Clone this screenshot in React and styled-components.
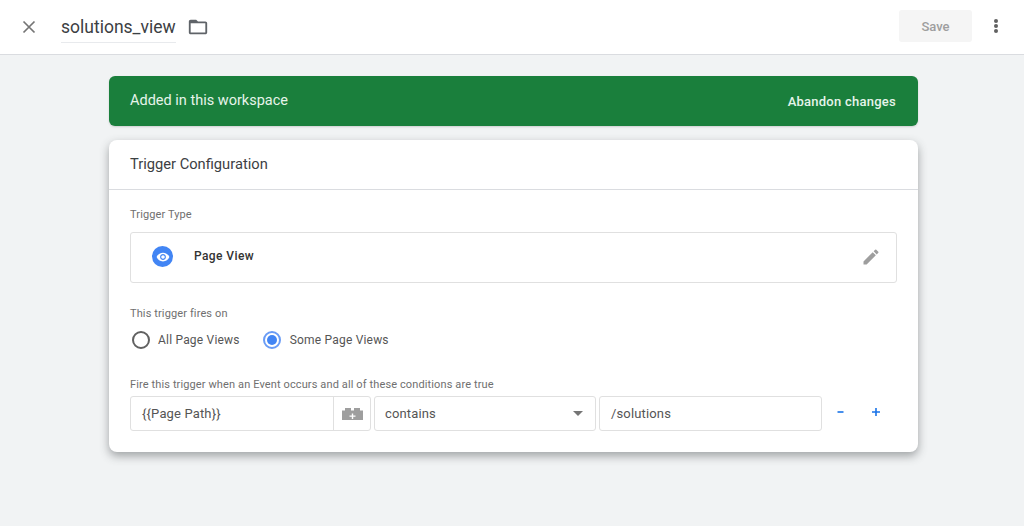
import React from "react";
import styled, { createGlobalStyle } from "styled-components";

const GlobalStyle = createGlobalStyle`
  html, body {
    margin: 0;
    padding: 0;
    background: #f1f3f4;
    font-family: Roboto, "Liberation Sans", sans-serif;
    overflow: hidden;
  }
`;

const Page = styled.div`
  width: 1024px;
  height: 526px;
  display: flex;
  flex-direction: column;
  background: #f1f3f4;
`;

const TopBar = styled.header`
  height: 55px;
  box-sizing: border-box;
  flex: none;
  display: flex;
  align-items: center;
  background: #fff;
  border-bottom: 1px solid #dadce0;
  padding: 0 25px 0 21px;
`;

const CloseButton = styled.div`
  width: 16px;
  height: 16px;
  display: flex;
  color: #757575;
`;

const TitleField = styled.div`
  margin-left: 24px;
  margin-top: 1px;
  font-size: 17.5px;
  line-height: 28px;
  height: 28px;
  color: #3c4043;
  border-bottom: 1px solid #e8eaed;
  padding-bottom: 1px;
`;

const FolderIcon = styled.svg`
  margin-left: 11px;
  width: 22px;
  height: 22px;
  color: #5f6368;
`;

const SaveButton = styled.div`
  margin-left: auto;
  margin-top: -2px;
  width: 73px;
  height: 32px;
  border-radius: 3px;
  background: #f5f5f5;
  color: #9e9e9e;
  font-size: 13px;
  font-weight: 500;
  display: flex;
  align-items: center;
  justify-content: center;
`;

const MoreDots = styled.div`
  margin-left: 22px;
  width: 5px;
  display: flex;
  flex-direction: column;
  gap: 1px;
  margin-top: -2px;
  span {
    width: 4px;
    height: 4px;
    border-radius: 50%;
    background: #616161;
  }
`;

const Content = styled.main`
  width: 809px;
  margin: 21px 0 0 109px;
  display: flex;
  flex-direction: column;
  gap: 14px;
`;

const Banner = styled.div`
  height: 50px;
  border-radius: 6px;
  background: #1a7f3c;
  color: #fff;
  display: flex;
  align-items: center;
  justify-content: space-between;
  padding: 0 22px 0 21px;
  box-shadow: 0 1px 2px rgba(60, 64, 67, 0.2);
`;

const BannerTitle = styled.div`
  font-size: 14.5px;
  margin-top: -2px;
  color: #e6f4ea;
`;

const BannerAction = styled.div`
  font-size: 13px;
  font-weight: 500;
  letter-spacing: 0.25px;
  margin-top: 1px;
  color: #e6f4ea;
`;

const Card = styled.section`
  background: #fff;
  border-radius: 8px;
  height: 312px;
  box-shadow: 0 4px 10px rgba(60, 64, 67, 0.45);
`;

const CardHeader = styled.div`
  height: 50px;
  box-sizing: border-box;
  border-bottom: 1px solid #dadce0;
  padding: 0 21px 2px;
  display: flex;
  align-items: center;
  font-size: 14.7px;
  color: #3c4043;
`;

const CardBody = styled.div`
  padding: 18px 21px 0;
  display: flex;
  flex-direction: column;
`;

const FieldLabel = styled.div`
  font-size: 11px;
  line-height: 13px;
  letter-spacing: 0.12px;
  color: #6f6f6f;
`;

const TypeBox = styled.div`
  margin-top: 11px;
  height: 51px;
  box-sizing: border-box;
  border: 1px solid #e0e0e0;
  border-radius: 3px;
  display: flex;
  align-items: center;
  padding: 0 15px 2px 21px;
`;

const TypeBadge = styled.div`
  width: 21px;
  height: 21px;
  border-radius: 50%;
  background: #4285f4;
  display: flex;
  align-items: center;
  justify-content: center;
  color: #fff;
`;

const TypeName = styled.div`
  margin-left: 21px;
  font-size: 12px;
  font-weight: 500;
  letter-spacing: 0.4px;
  color: #333;
  margin-top: -1px;
`;

const EditIcon = styled.svg`
  margin-left: auto;
  width: 20px;
  height: 20px;
  color: #9e9e9e;
`;

const FiresLabel = styled(FieldLabel)`
  margin-top: 24px;
`;

const RadioRow = styled.div`
  margin-top: 11px;
  display: flex;
  align-items: center;
  padding-left: 2px;
`;

const RadioItem = styled.div`
  display: flex;
  align-items: center;
  gap: ${(p) => (p.$wide ? 9 : 8)}px;
  margin-right: 23px;
  font-size: 12px;
  letter-spacing: 0.2px;
  color: #555;
`;

const RadioCircle = styled.span`
  width: 18px;
  height: 18px;
  box-sizing: border-box;
  border-radius: 50%;
  border: 2px solid ${(p) => (p.$on ? "#6a9cf5" : "#616161")};
  display: flex;
  align-items: center;
  justify-content: center;
  &::after {
    content: "";
    display: ${(p) => (p.$on ? "block" : "none")};
    width: 10px;
    height: 10px;
    border-radius: 50%;
    background: #4285f4;
  }
`;

const ConditionLabel = styled(FieldLabel)`
  margin-top: 29px;
`;

const ConditionRow = styled.div`
  margin-top: 5px;
  display: flex;
  align-items: center;
  gap: 3px;
`;

const InputBox = styled.div`
  width: ${(p) => p.$w}px;
  height: 35px;
  box-sizing: border-box;
  border: 1px solid #e0e0e0;
  border-radius: 3px;
  display: flex;
  align-items: center;
  font-size: 13px;
  letter-spacing: 0.15px;
  color: #555;
  padding-left: ${(p) => p.$pad}px;
`;

const VariableText = styled.span`
  flex: 1;
`;

const VariableButton = styled.div`
  width: 36px;
  align-self: stretch;
  border-left: 1px solid #e0e0e0;
  display: flex;
  align-items: center;
  justify-content: center;
  color: #9e9e9e;
`;

const Caret = styled.span`
  margin-left: auto;
  margin-right: 12px;
  width: 0;
  height: 0;
  border-left: 5px solid transparent;
  border-right: 5px solid transparent;
  border-top: 5px solid #757575;
`;

const RowActions = styled.div`
  display: flex;
  align-items: center;
  margin-left: 11px;
  gap: 25px;
  margin-top: -3px;
  color: #1a73e8;
`;

export default function App() {
  return (
    <Page>
      <GlobalStyle />
      <TopBar>
        <CloseButton>
          <svg viewBox="0 0 16 16" width="16" height="16" fill="none" stroke="currentColor" strokeWidth="1.7">
            <path d="M2.5 2.5l11 11M13.5 2.5l-11 11" />
          </svg>
        </CloseButton>
        <TitleField>solutions_view</TitleField>
        <FolderIcon viewBox="0 0 24 24" fill="currentColor">
          <path d="M20 6h-8l-2-2H4c-1.1 0-2 .9-2 2v12c0 1.1.9 2 2 2h16c1.1 0 2-.9 2-2V8c0-1.100-.9-2-2-2zm0 12H4V8h16v10z" />
        </FolderIcon>
        <SaveButton>Save</SaveButton>
        <MoreDots>
          <span />
          <span />
          <span />
        </MoreDots>
      </TopBar>
      <Content>
        <Banner>
          <BannerTitle>Added in this workspace</BannerTitle>
          <BannerAction>Abandon changes</BannerAction>
        </Banner>
        <Card>
          <CardHeader>Trigger Configuration</CardHeader>
          <CardBody>
            <FieldLabel>Trigger Type</FieldLabel>
            <TypeBox>
              <TypeBadge>
                <svg viewBox="0 0 24 24" width="14" height="14" fill="currentColor">
                  <path d="M12 4.500C7 4.500 2.730 7.610 1 12c1.730 4.390 6 7.500 11 7.500s9.270-3.110 11-7.500c-1.730-4.390-6-7.500-11-7.500zM12 17c-2.760 0-5-2.240-5-5s2.240-5 5-5 5 2.240 5 5-2.240 5-5 5zm0-8c-1.660 0-3 1.340-3 3s1.340 3 3 3 3-1.340 3-3-1.340-3-3-3z" />
                </svg>
              </TypeBadge>
              <TypeName>Page View</TypeName>
              <EditIcon viewBox="0 0 24 24" fill="currentColor">
                <path d="M3 17.250V21h3.750L17.810 9.940l-3.750-3.750L3 17.250zM20.710 7.040a1 1 0 0 0 0-1.410l-2.340-2.340a1 1 0 0 0-1.410 0l-1.830 1.830 3.750 3.750 1.830-1.830z" />
              </EditIcon>
            </TypeBox>
            <FiresLabel>This trigger fires on</FiresLabel>
            <RadioRow>
              <RadioItem>
                <RadioCircle />
                All Page Views
              </RadioItem>
              <RadioItem $wide>
                <RadioCircle $on />
                Some Page Views
              </RadioItem>
            </RadioRow>
            <ConditionLabel>Fire this trigger when an Event occurs and all of these conditions are true</ConditionLabel>
            <ConditionRow>
              <InputBox $w={241} $pad={11}>
                <VariableText>{"{{Page Path}}"}</VariableText>
                <VariableButton>
                  <svg viewBox="0 0 21 12" width="21" height="12" fill="currentColor">
                    <path
                      d="M0 2.500h3V0h6v2.500h3V0h6v2.500h3V12H0V2.500zM9.800 5.500v2H7.500v1.300h2.300v2.200h1.400V8.800h2.300V7.500h-2.300v-2H9.800z"
                      fillRule="evenodd"
                    />
                  </svg>
                </VariableButton>
              </InputBox>
              <InputBox $w={222} $pad={10}>
                contains
                <Caret />
              </InputBox>
              <InputBox $w={223} $pad={11}>/solutions</InputBox>
              <RowActions>
                <svg viewBox="0 0 10 10" width="10" height="10" fill="currentColor">
                  <path d="M1.500 4.200h6v1.600h-6z" />
                </svg>
                <svg viewBox="0 0 10 10" width="10" height="10" fill="currentColor">
                  <path d="M4.200 1h1.600v3.200H9v1.600H5.800V9H4.200V5.800H1V4.200h3.200z" />
                </svg>
              </RowActions>
            </ConditionRow>
          </CardBody>
        </Card>
      </Content>
    </Page>
  );
}
